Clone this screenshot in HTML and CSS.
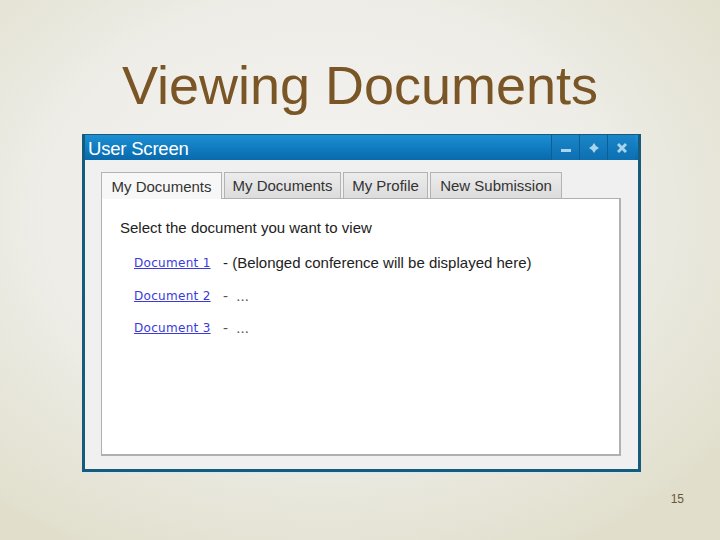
FILE: index.html
```html
<!DOCTYPE html>
<html>
<head>
<meta charset="utf-8">
<link rel="stylesheet" href="styles.css">
</head>
<body>
<div class="slide">
  <h1 class="title">Viewing Documents</h1>
  <div class="window">
    <div class="titlebar">
      <span class="wtitle">User Screen</span>
      <div class="controls">
        <span class="ctl"><svg width="12" height="12" viewBox="0 0 12 12"><rect x="1" y="7" width="10" height="3" fill="#a9d4ee"/></svg></span>
        <span class="ctl"><svg width="12" height="12" viewBox="0 0 12 12"><path d="M6 1 L8 4 L11 6 L8 8 L6 11 L4 8 L1 6 L4 4 Z" fill="#a9d4ee"/></svg></span>
        <span class="ctl"><svg width="12" height="12" viewBox="0 0 12 12"><path d="M1 3 L3 1 L6 4 L9 1 L11 3 L8 6 L11 9 L9 11 L6 8 L3 11 L1 9 L4 6 Z" fill="#a9d4ee"/></svg></span>
      </div>
    </div>
    <div class="wbody">
      <div class="tabs">
        <span class="tab active">My Documents</span>
        <span class="tab">My Documents</span>
        <span class="tab">My Profile</span>
        <span class="tab">New Submission</span>
      </div>
      <div class="panel">
        <p class="prompt">Select the document you want to view</p>
        <ul class="docs">
          <li><a class="doc" href="#">Document 1</a><span class="desc">- (Belonged conference will be displayed here)</span></li>
          <li><a class="doc" href="#">Document 2</a><span class="desc dim">-&nbsp;&nbsp;...</span></li>
          <li><a class="doc" href="#">Document 3</a><span class="desc dim">-&nbsp;&nbsp;...</span></li>
        </ul>
      </div>
    </div>
  </div>
  <div class="pagenum">15</div>
</div>
</body>
</html>
```
FILE: styles.css
```css
html, body {
  margin: 0;
  padding: 0;
}
body {
  width: 720px;
  height: 540px;
  overflow: hidden;
  font-family: "Liberation Sans", Arial, sans-serif;
}
.slide {
  width: 720px;
  height: 540px;
  box-sizing: border-box;
  background:
    radial-gradient(ellipse 70% 70% at 45% 40%, #f4f3f0 0%, #eeede8 55%, #e1dfcc 100%);
  display: flex;
  flex-direction: column;
}
.title {
  margin: 0;
  padding-top: 59px;
  height: 52px;
  font-weight: normal;
  font-size: 54px;
  line-height: 52px;
  color: #7a5526;
  text-align: center;
}
.window {
  margin-top: 23px;
  margin-left: 82px;
  width: 559px;
  height: 338px;
  box-sizing: border-box;
  border: 3px solid #165a7c;
  border-top-width: 1px;
  background: #f0f0f0;
  display: flex;
  flex-direction: column;
  box-shadow: 0 1px 0 #cfe9f5;
}
.titlebar {
  height: 25px;
  background: linear-gradient(#1d8fd2, #0f78bd 60%, #0a6aab);
  display: flex;
  align-items: center;
  justify-content: space-between;
  flex-shrink: 0;
}
.wtitle {
  color: #ffffff;
  font-size: 18.5px;
  padding-left: 3px;
  padding-top: 2px;
  letter-spacing: -0.2px;
}
.controls {
  display: flex;
  height: 100%;
  margin-right: 3px;
}
.ctl {
  width: 28px;
  height: 100%;
  display: flex;
  align-items: center;
  justify-content: center;
  background: linear-gradient(#1a86c8, #0d6fb1);
  border-left: 1px solid #0b5f99;
  box-sizing: border-box;
}
.wbody {
  flex: 1;
  padding: 12px 17px 13px 16px;
  display: flex;
  flex-direction: column;
}
.tabs {
  display: flex;
  gap: 2px;
  height: 26px;
  flex-shrink: 0;
}
.tab {
  box-sizing: border-box;
  height: 26px;
  padding: 0;
  display: flex;
  align-items: center;
  justify-content: center;
  white-space: nowrap;
  font-size: 15px;
  color: #333;
  background: linear-gradient(#ececec, #dcdcdc);
  border: 1px solid #b3b3b3;
  border-bottom: none;
}
.tab:nth-child(1) { width: 121px; }
.tab:nth-child(2) { width: 117px; }
.tab:nth-child(3) { width: 85px; }
.tab:nth-child(4) { width: 132px; }
.tab.active {
  background: #f7f7f7;
  height: 27px;
  margin-bottom: -1px;
  position: relative;
  z-index: 1;
}
.panel {
  flex: 1;
  background: #ffffff;
  border: 1px solid #b0b0b0;
  border-right-width: 2px;
  border-bottom-width: 2px;
  padding: 19px 18px;
}
.prompt {
  margin: 0;
  font-size: 15px;
  color: #222;
  line-height: 20px;
}
.docs {
  list-style: none;
  margin: 15px 0 0 14px;
  padding: 0;
}
.docs li {
  height: 32.5px;
  display: flex;
  align-items: flex-start;
  font-size: 15px;
  line-height: 20px;
}
.doc {
  color: #3a3adb;
  font-family: "DejaVu Sans", Verdana, sans-serif;
  font-size: 12px;
  letter-spacing: 0.3px;
  text-decoration: underline;
  width: 89px;
}
.desc {
  color: #222;
}
.desc.dim {
  color: #555;
}
.pagenum {
  margin-top: auto;
  margin-bottom: 34px;
  align-self: flex-end;
  margin-right: 36px;
  font-size: 12px;
  color: #6b5638;
}
```
